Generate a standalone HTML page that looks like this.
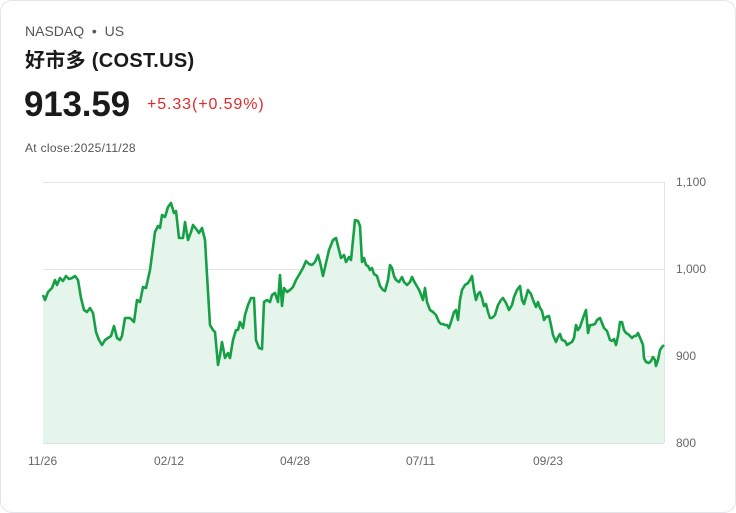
<!DOCTYPE html>
<html><head><meta charset="utf-8"><style>
body{margin:0;width:736px;height:513px;background:#fff;font-family:"Liberation Sans","Noto Sans CJK SC",sans-serif;overflow:hidden}
.card{position:absolute;left:0;top:0;width:734px;height:511px;border:1px solid #e2e6ea;border-radius:12px;background:#fff}
.t{position:absolute;white-space:nowrap}
</style></head><body><div class="card"></div>
<div class="t" style="left:25px;top:23px;font-size:14px;color:#555">NASDAQ &nbsp;•&nbsp; US</div>
<div class="t" style="left:25px;top:44px;font-size:20px;font-weight:bold;color:#1a1a1a;letter-spacing:0.3px">好市多 (COST.US)</div>
<div class="t" style="left:24px;top:85px;font-size:35px;font-weight:bold;color:#1a1a1a;letter-spacing:-0.2px">913.59</div>
<div class="t" style="left:147px;top:96px;font-size:16px;color:#e02a2a;letter-spacing:0.9px">+5.33(+0.59%)</div>
<div class="t" style="left:25px;top:141px;font-size:12px;color:#555;letter-spacing:0.3px">At close:2025/11/28</div>
<svg width="736" height="513" style="position:absolute;left:0;top:0">
<g stroke="#e3e3e3" stroke-width="1"><line x1="43" y1="182.5" x2="664" y2="182.5"/><line x1="43" y1="269.5" x2="664" y2="269.5"/><line x1="43" y1="356.5" x2="664" y2="356.5"/><line x1="43" y1="443.5" x2="664" y2="443.5"/><line x1="664.5" y1="182" x2="664.5" y2="443"/></g>
<polygon fill="#e6f5ec" points="43,443 43,295 45,300 48,292 52,288 55,280 57,285 60,278 63,281 66,276 69,279 72,278 75,276 78,280 81,298 84,310 87,312 90,308 93,313 96,332 99,340 102,345 105,340 108,338 111,336 114,326 117,338 120,340 122,336 125,318 130,318 134,322 137,300 140,302 143,287 146,288 150,270 152,255 155,232 158,226 160,228 162,215 165,217 168,207 171,203 174,213 176,211 179,238 183,238 185,222 188,240 191,232 193,225 197,230 199,233 202,228 205,240 207,275 210,325 213,330 215,332 218,365 220,355 222,342 225,358 228,353 230,358 233,340 236,330 238,330 240,322 243,328 245,315 248,305 251,298 254,298 256,340 259,348 262,349 264,302 267,300 270,302 272,295 275,293 278,302 280,275 282,306 284,288 287,292 290,290 293,287 296,280 299,275 303,268 306,261 309,264 312,265 315,262 318,255 320,262 323,276 326,263 329,250 333,240 336,238 339,250 341,258 344,255 346,262 349,257 351,260 353,240 355,220 358,221 360,226 362,262 364,258 366,265 368,266 370,270 372,268 374,274 377,276 380,286 383,290 385,291 388,280 390,265 392,268 394,276 396,280 399,282 402,277 404,282 407,285 410,282 412,277 415,283 418,288 420,292 423,300 425,288 427,302 430,310 433,312 436,315 439,322 441,324 443,324 445,325 447,325 449,328 451,322 454,312 456,310 458,320 460,300 462,290 465,285 468,283 470,280 472,276 474,290 476,300 478,294 480,292 482,298 484,306 486,304 488,312 490,318 492,318 495,315 498,305 501,300 503,298 506,303 509,310 512,305 514,297 517,290 520,286 522,300 524,304 526,297 528,290 531,294 533,300 536,307 538,302 540,308 542,311 544,320 546,317 549,316 551,325 553,335 556,342 558,337 560,334 562,340 565,341 567,345 570,343 572,342 574,338 576,325 578,330 580,327 583,318 586,310 588,333 590,325 592,325 595,324 597,320 600,318 602,323 604,328 607,331 610,340 612,341 614,339 616,345 618,336 620,322 622,322 624,330 626,333 628,334 630,336 632,338 634,336 636,336 638,333 641,340 643,345 644,358 646,362 649,363 651,361 653,357 655,360 656,366 658,360 660,350 662,347 664,345 664,443"/>
<polyline fill="none" stroke="#16a045" stroke-width="2.6" stroke-linejoin="round" points="43,295 45,300 48,292 52,288 55,280 57,285 60,278 63,281 66,276 69,279 72,278 75,276 78,280 81,298 84,310 87,312 90,308 93,313 96,332 99,340 102,345 105,340 108,338 111,336 114,326 117,338 120,340 122,336 125,318 130,318 134,322 137,300 140,302 143,287 146,288 150,270 152,255 155,232 158,226 160,228 162,215 165,217 168,207 171,203 174,213 176,211 179,238 183,238 185,222 188,240 191,232 193,225 197,230 199,233 202,228 205,240 207,275 210,325 213,330 215,332 218,365 220,355 222,342 225,358 228,353 230,358 233,340 236,330 238,330 240,322 243,328 245,315 248,305 251,298 254,298 256,340 259,348 262,349 264,302 267,300 270,302 272,295 275,293 278,302 280,275 282,306 284,288 287,292 290,290 293,287 296,280 299,275 303,268 306,261 309,264 312,265 315,262 318,255 320,262 323,276 326,263 329,250 333,240 336,238 339,250 341,258 344,255 346,262 349,257 351,260 353,240 355,220 358,221 360,226 362,262 364,258 366,265 368,266 370,270 372,268 374,274 377,276 380,286 383,290 385,291 388,280 390,265 392,268 394,276 396,280 399,282 402,277 404,282 407,285 410,282 412,277 415,283 418,288 420,292 423,300 425,288 427,302 430,310 433,312 436,315 439,322 441,324 443,324 445,325 447,325 449,328 451,322 454,312 456,310 458,320 460,300 462,290 465,285 468,283 470,280 472,276 474,290 476,300 478,294 480,292 482,298 484,306 486,304 488,312 490,318 492,318 495,315 498,305 501,300 503,298 506,303 509,310 512,305 514,297 517,290 520,286 522,300 524,304 526,297 528,290 531,294 533,300 536,307 538,302 540,308 542,311 544,320 546,317 549,316 551,325 553,335 556,342 558,337 560,334 562,340 565,341 567,345 570,343 572,342 574,338 576,325 578,330 580,327 583,318 586,310 588,333 590,325 592,325 595,324 597,320 600,318 602,323 604,328 607,331 610,340 612,341 614,339 616,345 618,336 620,322 622,322 624,330 626,333 628,334 630,336 632,338 634,336 636,336 638,333 641,340 643,345 644,358 646,362 649,363 651,361 653,357 655,360 656,366 658,360 660,350 662,347 664,345"/>
<g font-family="Liberation Sans,sans-serif" font-size="12" fill="#666"><text x="676" y="186">1,100</text><text x="676" y="273">1,000</text><text x="676" y="360">900</text><text x="676" y="447">800</text>
<text x="28" y="465">11/26</text><text x="154" y="465">02/12</text><text x="280" y="465">04/28</text><text x="406" y="465">07/11</text><text x="533" y="465">09/23</text></g>
</svg>
</body></html>
